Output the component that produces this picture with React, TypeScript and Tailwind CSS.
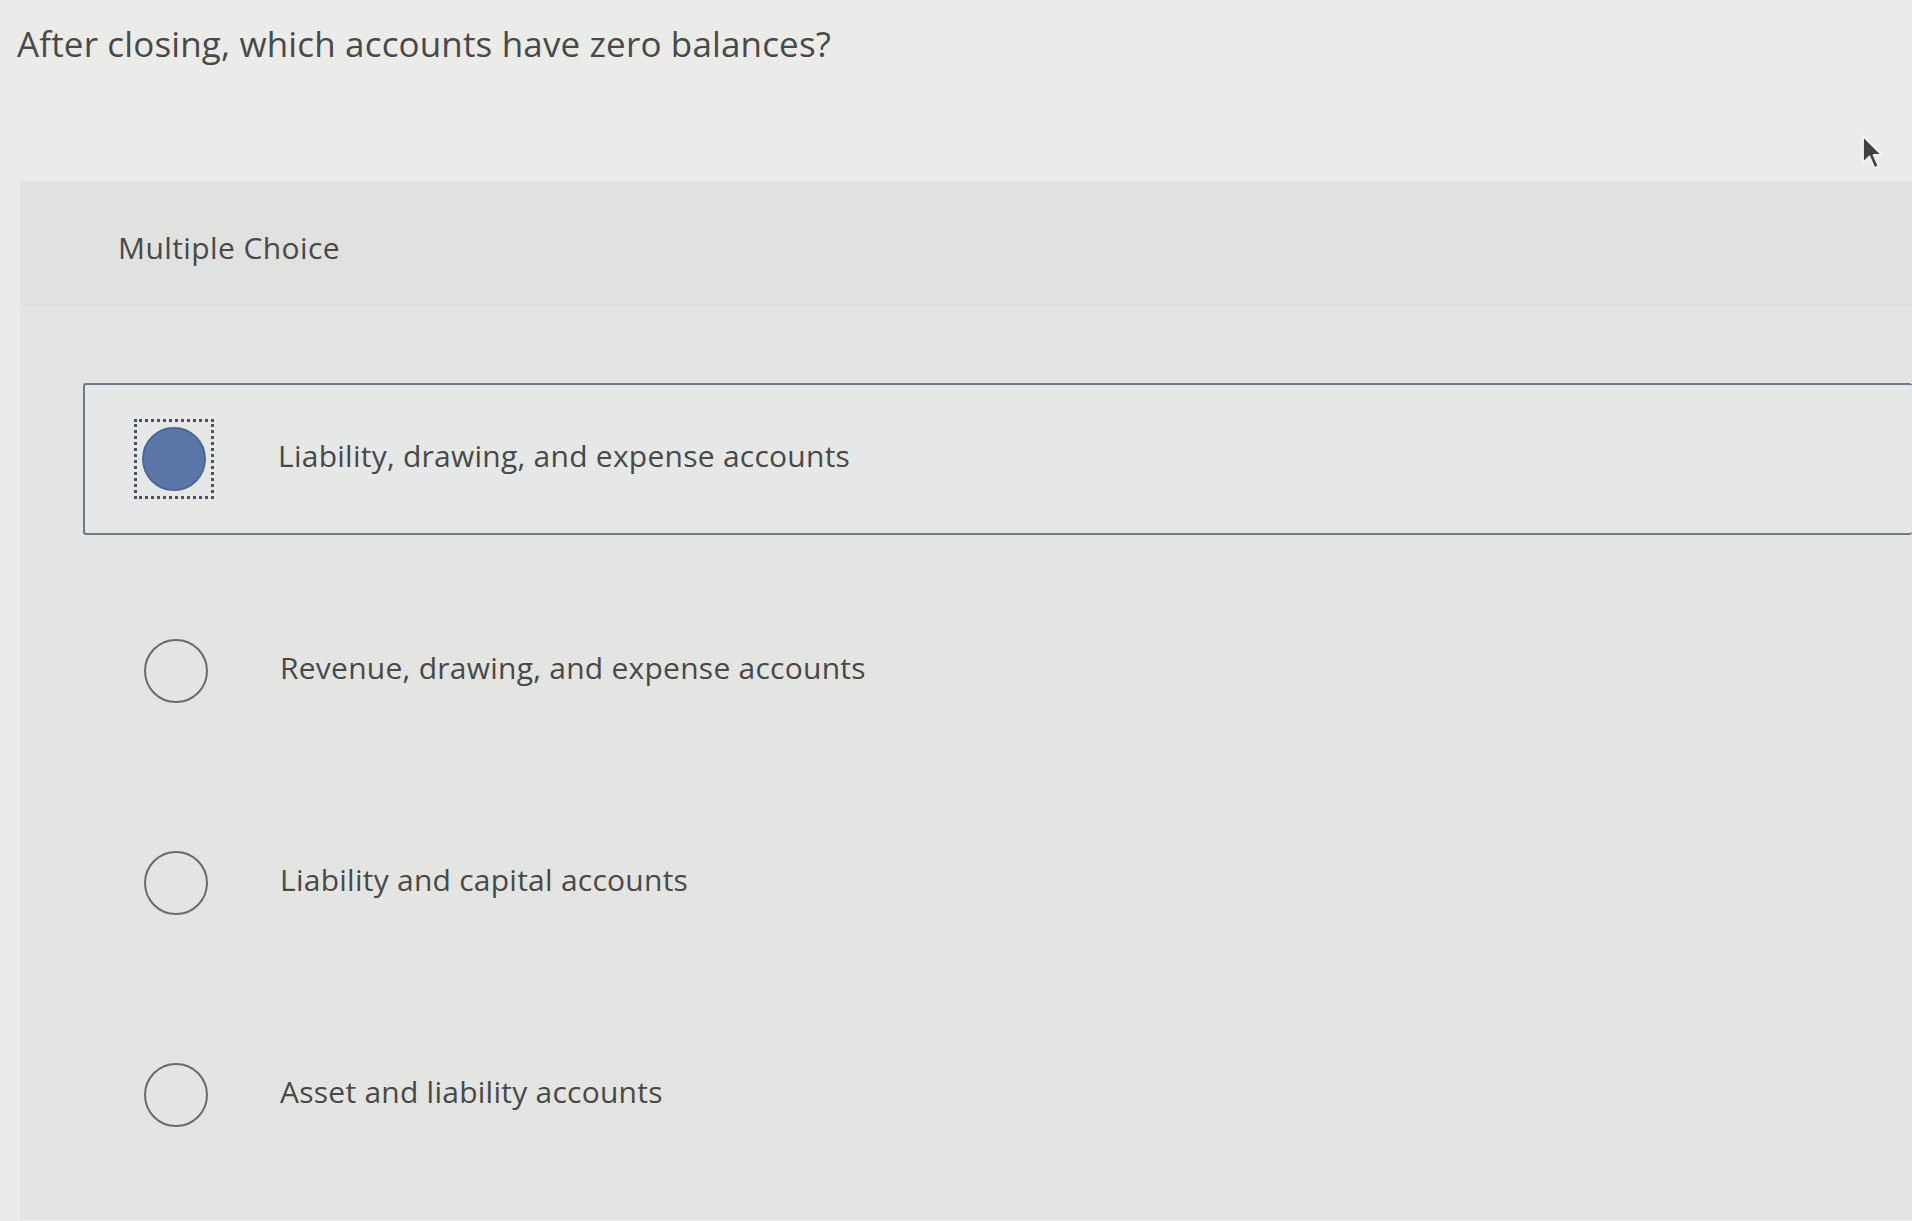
import { useState } from "react";

const options = [
  "Liability, drawing, and expense accounts",
  "Revenue, drawing, and expense accounts",
  "Liability and capital accounts",
  "Asset and liability accounts",
];

const Radio = ({ checked }: { checked: boolean }) => {
  if (checked) {
    return (
      <div className="flex h-[80px] w-[80px] shrink-0 items-center justify-center border-[3px] border-dotted border-[#4a5468]">
        <div className="h-[64px] w-[64px] rounded-full border-2 border-[#4f6794] bg-[#5b77aa]" />
      </div>
    );
  }
  return (
    <div className="flex h-[80px] w-[80px] shrink-0 items-center justify-center">
      <div className="h-[64px] w-[64px] rounded-full border-2 border-[#6a6a6a]" />
    </div>
  );
};

const App = () => {
  const [selected, setSelected] = useState(0);

  return (
    <div className="relative min-h-screen overflow-hidden bg-[#ebebe9] font-['Open_Sans',sans-serif] text-[#494949]">
      <h1 className="pl-[17px] pt-[23px] text-[35px] leading-[42px] font-normal tracking-[0.15px]">
        After closing, which accounts have zero balances?
      </h1>

      {/* mouse pointer */}
      <svg
        className="absolute left-[1860px] top-[134px]"
        width="26"
        height="38"
        viewBox="0 0 26 38"
      >
        <path
          d="M3 2 L3 29 L9.5 22.5 L14.5 34 L18.5 32 L13.5 21 L22 21 Z"
          fill="#404040"
          stroke="#f5f5f5"
          strokeWidth="1.8"
          strokeLinejoin="round"
        />
      </svg>

      <div className="ml-[20px] mt-[116px] min-h-[1038px] bg-[#e4e4e2]">
        <div className="flex h-[125px] items-center bg-[#e1e1df] pl-[98px] pt-[8px] text-[30px] tracking-[0.4px]">
          Multiple Choice
        </div>

        <div className="flex flex-col gap-[60px] pl-[63px] pt-[77px]">
          {options.map((label, i) => (
            <button
              key={label}
              type="button"
              onClick={() => setSelected(i)}
              className={
                i === selected
                  ? "flex h-[152px] items-center rounded-[3px] border-2 border-r-0 border-[#6b7a8f] bg-[#e6e7e7] pl-[49px] text-left"
                  : "flex h-[152px] items-center border-2 border-transparent pl-[51px] text-left"
              }
            >
              <Radio checked={i === selected} />
              <span className="ml-[64px] -mt-[6px] text-[30px] leading-[38px] tracking-[0.25px]">{label}</span>
            </button>
          ))}
        </div>
      </div>
    </div>
  );
};

export default App;
